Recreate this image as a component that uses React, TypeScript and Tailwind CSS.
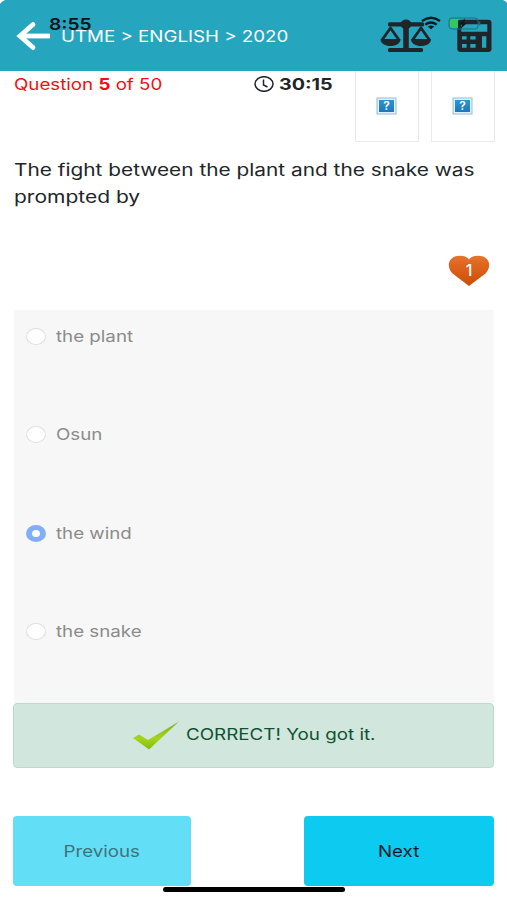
import { useState } from 'react'

const options = ['the plant', 'Osun', 'the wind', 'the snake']

function BackArrow() {
  return (
    <svg className="w-[36px] h-[30px]" viewBox="0 0 36 30" fill="none" stroke="white" strokeWidth="4.8">
      <path d="M5 15H35" />
      <path d="M18 3.500L5 15L18 26.500" strokeLinecap="round" strokeLinejoin="miter" />
    </svg>
  )
}

function ScaleIcon() {
  return (
    <svg className="w-[52px] h-[34px]" viewBox="0 0 52 34" fill="#212529">
      <rect x="8" y="3.2" width="36" height="4.2" rx="1.5" />
      <ellipse cx="26" cy="5.2" rx="5.6" ry="4.6" />
      <rect x="23.2" y="5" width="5.6" height="26" />
      <rect x="8" y="29" width="35" height="4" rx="1.5" />
      <path d="M2 21L10.500 9L19 21" fill="none" stroke="#212529" strokeWidth="2.800" strokeLinejoin="round" />
      <path d="M0.500 20H20.500C20.500 24.800 15.800 27 10.500 27S0.500 24.800 0.500 20Z" />
      <path d="M32.500 21L41 9L49.500 21" fill="none" stroke="#212529" strokeWidth="2.800" strokeLinejoin="round" />
      <path d="M31 20H51C51 24.800 46.300 27 41 27S31 24.800 31 20Z" />
    </svg>
  )
}

function CalculatorIcon() {
  return (
    <svg className="w-[35px] h-[34px]" viewBox="0 0 35 34">
      <path
        fill="#212529"
        fillRule="evenodd"
        d="M4 0.8H31Q34.5 0.8 34.5 4V30Q34.5 33 31 33H4Q0.3 33 0.3 30V4Q0.3 0.8 4 0.8ZM4.3 5.200V12.800H30.300V5.200ZM5 17.300V20.500H9.600V17.300ZM13.300 17.300V20.500H18.600V17.300ZM5 25V28.700H9.600V25ZM13.300 25V28.700H18.600V25ZM25 17.300V28.700H29.300V17.300Z"
      />
    </svg>
  )
}

function StatusIcons() {
  return (
    <div className="absolute left-[421px] top-[16px]">
      <svg className="w-[60px] h-[15px]" viewBox="0 0 60 15" fill="none">
        <g stroke="#0b1a1e" strokeWidth="2.4">
          <path d="M1 5Q10 -1.500 19 5" />
          <path d="M4.300 8.600Q10 4.400 15.700 8.600" />
        </g>
        <path d="M6.800 10.600Q10 8.300 13.200 10.600L10 13.300Z" fill="#0b1a1e" />
        <rect x="28" y="2" width="29" height="11" rx="3" stroke="#1c6f80" />
        <path d="M31 3H37V12H31Q29 12 29 10V5Q29 3 31 3Z" fill="#34c759" />
        <path d="M58.500 5.500V9.500" stroke="#1c6f80" strokeWidth="1.500" />
        <path d="M44 2.500L37.500 8.500H41L40 12.500L46 7H43Z" fill="#0b1a1e" />
      </svg>
    </div>
  )
}

// Blue question mark shown for a picture that did not load
function MissingImage() {
  return (
    <svg className="w-[21px] h-[18px]" viewBox="0 0 21 18">
      <defs>
        <linearGradient id="missing" x1="0" y1="0" x2="0" y2="1">
          <stop offset="0" stopColor="#2f93d3" />
          <stop offset="1" stopColor="#1c78bd" />
        </linearGradient>
      </defs>
      <rect x="1" y="1" width="19" height="16" fill="#e4f0fc" stroke="#8fbbe2" />
      <rect x="3" y="3" width="15" height="12" fill="url(#missing)" />
      <text x="10.500" y="13.200" textAnchor="middle" fill="white" className="text-[12px] font-semibold font-[Inter,sans-serif]">?</text>
    </svg>
  )
}

function Heart() {
  return (
    <svg className="w-[42px] h-[32px]" viewBox="0 0 42 32">
      <defs>
        <linearGradient id="heart" x1="0" y1="0" x2="0" y2="1">
          <stop offset="0" stopColor="#e5762f" />
          <stop offset="0.300" stopColor="#df651f" />
          <stop offset="1" stopColor="#cc4e05" />
        </linearGradient>
      </defs>
      <path d="M21 31L4.500 18.500C-2 12 0 1 11.500 0.800C16.500 0.700 19.500 2.300 21 4.500C22.500 2.300 25.500 0.700 30.500 0.800C42 1 44 12 37.500 18.500Z" fill="url(#heart)" />
      <text x="21" y="21" textAnchor="middle" fill="white" className="text-[16px] font-medium font-[Inter,sans-serif]">1</text>
    </svg>
  )
}

function CheckMark() {
  return (
    <svg className="w-[48px] h-[30px]" viewBox="0 0 48 30">
      <defs>
        <linearGradient id="check" x1="0" y1="0" x2="0" y2="1">
          <stop offset="0" stopColor="#78ad25" />
          <stop offset="0.600" stopColor="#a5d51c" />
          <stop offset="1" stopColor="#83bd0b" />
        </linearGradient>
      </defs>
      <path d="M1 17L7 13.500L16 19L47 0.500L17 28.500Z" fill="url(#check)" />
    </svg>
  )
}

export default function App() {
  const [selected, setSelected] = useState(2)

  return (
    <div className="relative w-[507px] h-[900px] overflow-hidden bg-white font-[Inter,sans-serif] text-[16px] leading-[27px] text-[#212529]">
      <header className="relative h-[71px] bg-[#25a6be] flex items-start justify-between px-[15px]">
        <div className="flex items-center pt-[21px]">
          <BackArrow />
          <span className="ml-[10px] inline-block origin-left scale-x-[1.17] whitespace-nowrap text-white">UTME &gt; ENGLISH &gt; 2020</span>
        </div>
        <div className="flex pt-[19px] gap-[25px]">
          <ScaleIcon />
          <CalculatorIcon />
        </div>
        <span className="absolute left-[49px] top-[11px] inline-block origin-left scale-x-[1.2] font-semibold text-[#071417]">8:55</span>
        <StatusIcons />
        <svg className="absolute left-0 top-0 w-[6px] h-[5px]" viewBox="0 0 6 5"><path d="M0 0H5Q1.500 1.500 0 4Z" fill="white" /></svg>
        <svg className="absolute right-0 top-0 w-[6px] h-[5px]" viewBox="0 0 6 5"><path d="M6 0H2Q5 1 6 3Z" fill="white" /></svg>
      </header>

      <div className="flex h-[71px] pl-[14px]">
        <div className="w-[240px] text-[#f20d12]">
          <span className="inline-block origin-left scale-x-[1.17] whitespace-nowrap">Question <b>5</b> of 50</span>
        </div>
        <div className="w-[101px] h-[26px] flex items-center">
          <svg className="w-[20px] h-[16px] shrink-0" viewBox="0 0 20 16" fill="none" stroke="#212529">
            <ellipse cx="10" cy="8" rx="9" ry="7.300" strokeWidth="1.500" />
            <path d="M9.500 3.500V9L13.500 11" strokeWidth="1.500" />
          </svg>
          <span className="ml-[5px] inline-block origin-left scale-x-[1.23] font-bold">30:15</span>
        </div>
        <div className="flex gap-[12px]">
          <div className="w-[64px] h-[71px] border border-t-0 border-[#e9e9e9] flex justify-center pt-[26px] pr-[1px]"><MissingImage /></div>
          <div className="w-[64px] h-[71px] border border-t-0 border-[#e9e9e9] flex justify-center pt-[26px] pr-[1px]"><MissingImage /></div>
        </div>
      </div>

      <p className="mt-[15px] ml-[14px] flex flex-col items-start text-[17px]">
        <span className="inline-block origin-left scale-x-[1.225] whitespace-nowrap">The fight between the plant and the snake was</span>
        <span className="inline-block origin-left scale-x-[1.235] whitespace-nowrap">prompted by</span>
      </p>

      <div className="mt-[44px] h-[55px] pr-[17px] flex justify-end"><Heart /></div>

      <div className="ml-[14px] mr-[13px] h-[393px] bg-[#f7f7f7] pt-[13px]">
        {options.map((option, i) => (
          <label key={option} className="h-[98.400px] flex items-start pl-[12px] text-[#8b8b8b]">
            <input type="radio" name="answer" className="sr-only" checked={selected === i} onChange={() => setSelected(i)} />
            <span
              className={`mt-[5px] w-[20px] h-[17px] shrink-0 rounded-[50%] bg-white ${
                selected === i ? 'border-x-[6px] border-y-[5px] border-[#82adf7]' : 'border border-[#dfdfdf]'
              }`}
            />
            <span className="ml-[10px] inline-block origin-left scale-x-[1.17] whitespace-nowrap">{option}</span>
          </label>
        ))}
      </div>

      <div className="ml-[13px] mr-[13px] h-[65px] border border-[#badbcc] rounded-[4px] bg-[#d1e7dd] text-[#0f5132] flex pl-[118px]">
        <div className="pt-[17px]"><CheckMark /></div>
        <span className="ml-[6px] mt-[17px] inline-block origin-left scale-x-[1.175] whitespace-nowrap">CORRECT! You got it.</span>
      </div>

      <div className="mx-[13px] mt-[48px] flex justify-between">
        <button className="w-[178px] h-[70px] rounded-[4px] bg-[#62dff7] text-[#3f727a]">
          <span className="inline-block scale-x-[1.17]">Previous</span>
        </button>
        <button className="w-[190px] h-[70px] rounded-[4px] bg-[#0dcaf0] text-[#06191e]">
          <span className="inline-block scale-x-[1.17]">Next</span>
        </button>
      </div>

      {/* home indicator */}
      <div className="absolute left-[163px] top-[887px] w-[182px] h-[5px] rounded-full bg-black" />
    </div>
  )
}
